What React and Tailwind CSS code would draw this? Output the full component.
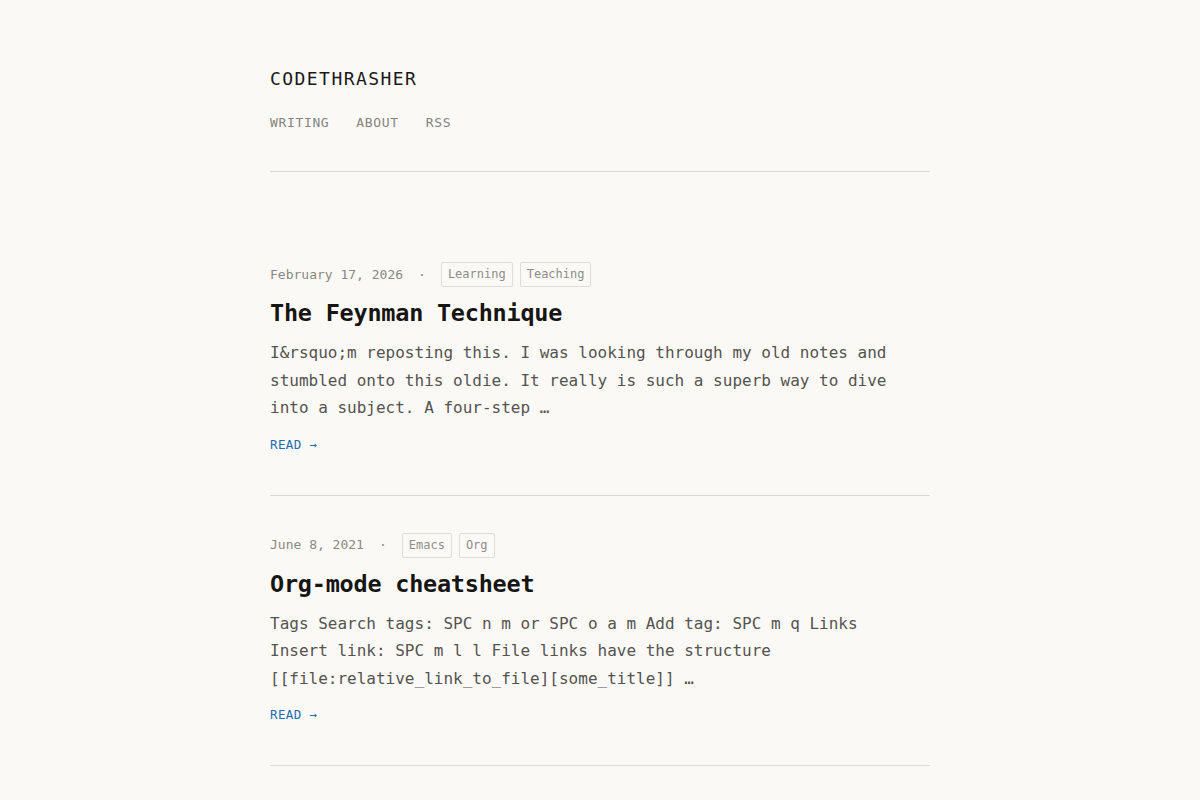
import React from 'react';

const POSTS = [
  {
    date: 'February 17, 2026',
    tags: ['Learning', 'Teaching'],
    title: 'The Feynman Technique',
    excerpt:
      'I&rsquo;m reposting this. I was looking through my old notes and stumbled onto this oldie. It really is such a superb way to dive into a subject. A four-step …',
  },
  {
    date: 'June 8, 2021',
    tags: ['Emacs', 'Org'],
    title: 'Org-mode cheatsheet',
    excerpt:
      'Tags Search tags: SPC n m or SPC o a m Add tag: SPC m q Links Insert link: SPC m l l File links have the structure [[file:relative_link_to_file][some_title]] …',
  },
];

const mono = "font-['DejaVu_Sans_Mono','Liberation_Mono',monospace]";

function PostCard({ post }) {
  return (
    <article className="pt-[37px] pb-[39px] border-b border-[#dcdad5]">
      <div className="flex items-center gap-[15px] text-[13px] text-[#8a8883]">
        <span>{post.date}</span>
        <span>·</span>
        <div className="flex gap-[7px]">
          {post.tags.map((t) => (
            <span
              key={t}
              className="border border-[#dedcd7] rounded-[2px] px-[6px] py-[3px] text-[12px] leading-[17px] text-[#8f8d88]"
            >
              {t}
            </span>
          ))}
        </div>
      </div>
      <h2 className="mt-[11px] text-[23.5px] leading-[31px] font-bold text-[#161513] tracking-[-0.01em]">
        {post.title}
      </h2>
      <p className="mt-[10px] max-w-[65ch] text-[16px] leading-[27.5px] text-[#55534f]">{post.excerpt}</p>
      <a href="#" className="inline-block mt-[14px] text-[12.5px] leading-[18px] tracking-[0.03em] text-[#1d6db3]">
        READ →
      </a>
    </article>
  );
}

export default function App() {
  return (
    <div className={`min-h-screen bg-[#faf9f6] ${mono}`}>
      <div className="w-[660px] mx-auto">
        <header className="pt-[67px] pb-[39px] border-b border-[#dcdad5]">
          <h1 className="text-[18px] leading-[24px] tracking-[0.08em] text-[#1a1917]">CODETHRASHER</h1>
          <nav className="mt-[23px] flex gap-[27px] text-[13px] leading-[18px] tracking-[0.05em] text-[#85837e]">
            <a href="#">WRITING</a>
            <a href="#">ABOUT</a>
            <a href="#">RSS</a>
          </nav>
        </header>
        <main className="pt-[53px]">
          {POSTS.map((p) => (
            <PostCard key={p.title} post={p} />
          ))}
        </main>
      </div>
    </div>
  );
}
